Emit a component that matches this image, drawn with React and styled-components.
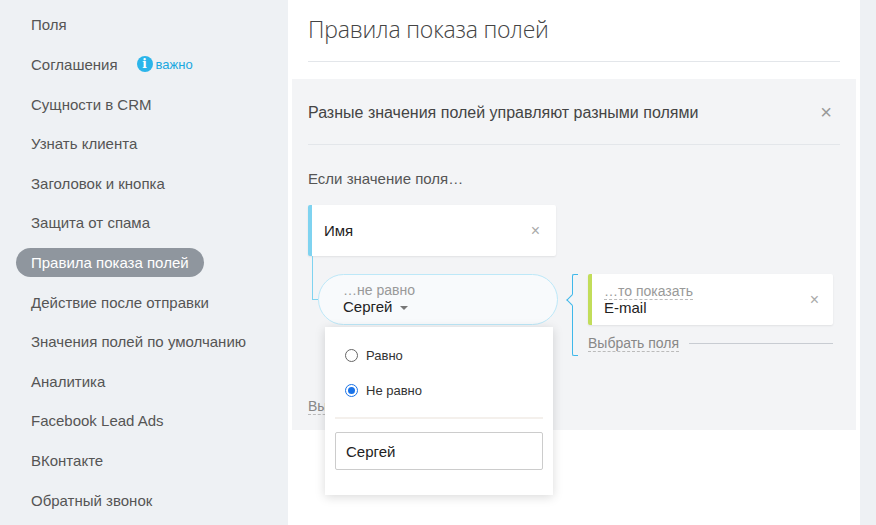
import React from "react";
import styled, { createGlobalStyle } from "styled-components";

const G = createGlobalStyle`
  body{margin:0;font-family:"Liberation Sans",Arial,sans-serif;color:#333;}
  *{box-sizing:border-box;}
`;
const Page = styled.div`display:flex;width:876px;height:525px;overflow:hidden;`;
const Side = styled.nav`width:288px;background:#eef1f4;padding:10px 0 0 16px;display:flex;flex-direction:column;`;
const Item = styled.div`
  height:30px;margin-bottom:10px;display:flex;align-items:center;align-self:flex-start;
  padding:0 15px;border-radius:15px;font-size:15px;
  color:${p=>p.$a?"#fff":"#555"};background:${p=>p.$a?"#8f969e":"transparent"};
`;
const Badge = styled.span`display:inline-flex;align-items:center;gap:3px;margin-left:19px;color:#1ba8e0;font-size:13px;`;
const Info = styled.span`width:16px;height:16px;border-radius:50%;background:#2bb5ea;color:#fff;font-size:12px;font-weight:bold;display:inline-flex;align-items:center;justify-content:center;font-family:"DejaVu Serif",serif;`;
const Main = styled.main`width:572px;background:#fff;padding:0 4px;display:flex;flex-direction:column;`;
const Right = styled.div`width:16px;background:#eef1f4;`;
const Title = styled.h1`margin:0 16px;font-weight:300;font-size:23px;color:#444;height:62px;display:flex;align-items:center;padding-bottom:4px;border-bottom:1px solid #e3e6ea;font-family:"Open Sans","Liberation Sans",sans-serif;letter-spacing:-0.2px;`;
const Panel = styled.section`margin-top:17px;background:#f3f4f6;padding:0 16px;height:351px;position:relative;`;
const PanelHead = styled.div`height:66px;padding-top:2px;display:flex;align-items:center;justify-content:space-between;border-bottom:1px solid #e3e6ea;font-size:16px;color:#444;`;
const Close = styled.span`color:${p=>p.$c||"#999"};font-size:${p=>p.$s||20}px;margin-right:${p=>p.$m||10}px;`;
const Label = styled.div`font-size:15px;color:#555;margin-top:25px;`;
const Card = styled.div`
  background:#fff;border-left:4px solid ${p=>p.$c};box-shadow:0 1px 2px rgba(0,0,0,.08);
  display:flex;align-items:center;justify-content:space-between;padding-left:12px;
  width:${p=>p.$w}px;height:51px;border-radius:2px;
`;
const CardText = styled.div`font-size:15px;color:#222;`;
const Small = styled.div`font-size:14px;color:#999;`;
const Dashed = styled.span`border-bottom:1px dashed #bbb;`;
const Row = styled.div`display:flex;align-items:flex-start;margin-top:18px;position:relative;`;
const Connector = styled.div`width:6px;height:44px;border-left:1px solid #7fd3f0;border-bottom:1px solid #7fd3f0;margin-top:-18px;margin-left:4px;`;
const Pill = styled.div`width:240px;height:51px;border:1px solid #bde8f8;border-radius:26px;background:#f8fafc;padding:7px 0 0 24px;`;
const Bracket = styled.div`width:6px;height:82px;border:1px solid #3fb8ea;border-right:none;margin-left:14px;border-radius:2px 0 0 2px;position:relative;
  &:after{content:"";position:absolute;left:-5px;top:21px;width:7px;height:7px;border-left:1px solid #3fb8ea;border-bottom:1px solid #3fb8ea;transform:rotate(45deg);background:#f3f4f6;}`;
const Col = styled.div`display:flex;flex-direction:column;margin-left:10px;`;
const PickRow = styled.div`display:flex;align-items:center;gap:10px;margin-top:10px;font-size:14px;color:#888;`;
const Line = styled.div`flex:1;height:1px;background:#c8ccd2;`;
const Caret = styled.span`display:inline-block;margin-left:8px;border:4px solid transparent;border-top-color:#777;vertical-align:middle;margin-top:4px;`;
const Hidden = styled.div`font-size:14px;color:#888;margin-top:42px;`;
const Drop = styled.div`position:absolute;left:33px;top:248px;width:228px;height:168px;background:#fff;box-shadow:0 2px 10px rgba(0,0,0,.15);padding:11px 10px 0;`;
const Opt = styled.label`display:flex;align-items:center;gap:8px;font-size:13px;color:#333;height:35px;padding-left:10px;`;
const Radio = styled.span`width:13px;height:13px;border-radius:50%;border:1px solid ${p=>p.$on?"#1a73e8":"#666"};display:flex;align-items:center;justify-content:center;
  &:after{content:"";width:7px;height:7px;border-radius:50%;background:${p=>p.$on?"#1a73e8":"transparent"};}`;
const Sep = styled.div`height:2px;background:#f4f0ec;margin:9px 0 13px;`;
const Input = styled.div`height:38px;border:1px solid #ccc;border-radius:2px;display:flex;align-items:center;padding-left:10px;font-size:15px;color:#222;`;

const items=["Поля","Соглашения","Сущности в CRM","Узнать клиента","Заголовок и кнопка","Защита от спама","Правила показа полей","Действие после отправки","Значения полей по умолчанию","Аналитика","Facebook Lead Ads","ВКонтакте","Обратный звонок"];

export default function App(){
  return <Page><G/>
    <Side>{items.map((t,i)=><Item key={t} $a={i===6}>{t}{i===1&&<Badge><Info>i</Info>важно</Badge>}</Item>)}</Side>
    <Main>
      <Title>Правила показа полей</Title>
      <Panel>
        <PanelHead>Разные значения полей управляют разными полями<Close $m={8}>×</Close></PanelHead>
        <Label>Если значение поля…</Label>
        <div style={{marginTop:18}}>
          <Card $c="#7fd3f0" $w={248}><CardText>Имя</CardText><Close $s={16} $m={16} $c="#aaa">×</Close></Card>
        </div>
        <Row style={{marginTop:18}}>
          <Connector/>
          <Pill><Small>…не равно</Small><CardText>Сергей<Caret/></CardText></Pill>
          <Bracket/>
          <Col>
            <Card $c="#c2dd5a" $w={245}><div><Small><Dashed>…то показать</Dashed></Small><CardText>E-mail</CardText></div><Close $s={16} $m={14} $c="#aaa">×</Close></Card>
            <PickRow><Dashed>Выбрать поля</Dashed><Line/></PickRow>
          </Col>
        </Row>
        <Hidden><Dashed>Выбрать поля</Dashed></Hidden>
        <Drop>
          <Opt><Radio/>Равно</Opt>
          <Opt><Radio $on/>Не равно</Opt>
          <Sep/>
          <Input>Сергей</Input>
        </Drop>
      </Panel>
    </Main>
    <Right/>
  </Page>;
}
